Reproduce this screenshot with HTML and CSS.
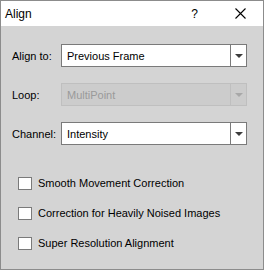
FILE: index.html
```html
<!DOCTYPE html>
<html lang="en">
<head>
    <meta charset="UTF-8">
    <title>Align</title>
    <link rel="stylesheet" href="styles.css">
</head>
<body>
    <div class="window">
        <div class="titlebar">
            <span class="title">Align</span>
            <span class="help">?</span>
            <span class="close">
                <svg width="11" height="11" viewBox="0 0 11 11"><path d="M0.5 0.5 L10.5 10.5 M10.5 0.5 L0.5 10.5" stroke="#000" stroke-width="1.1" fill="none"/></svg>
            </span>
        </div>
        <div class="content">
            <div class="row">
                <label class="label">Align to:</label>
                <div class="combo"><span class="value">Previous Frame</span><span class="arrow"></span></div>
            </div>
            <div class="row">
                <label class="label">Loop:</label>
                <div class="combo disabled"><span class="value">MultiPoint</span><span class="arrow"></span></div>
            </div>
            <div class="row">
                <label class="label">Channel:</label>
                <div class="combo"><span class="value">Intensity</span><span class="arrow"></span></div>
            </div>

            <div class="checks">
                <div class="check"><span class="box"></span>Smooth Movement Correction</div>
                <div class="check"><span class="box"></span>Correction for Heavily Noised Images</div>
                <div class="check"><span class="box"></span>Super Resolution Alignment</div>
            </div>
        </div>
    </div>
</body>
</html>
```

FILE: styles.css
```css
* {
    box-sizing: border-box;
}
body {
    margin: 0;
    font-family: "Liberation Sans", Arial, sans-serif;
    font-size: 11px;
    color: #000;
}
.window {
    width: 264px;
    height: 270px;
    border: 1px solid #8c8c8c;
    background-color: #d4d4d4;
    display: flex;
    flex-direction: column;
}
.titlebar {
    height: 25px;
    background-color: #fff;
    display: flex;
    align-items: center;
    font-size: 12px;
}
.title {
    margin-left: 4px;
}
.help {
    margin-left: auto;
    margin-right: 37px;
}
.close {
    display: flex;
    margin-right: 17px;
}
.content {
    padding: 18px 16px 0 11px;
}
.row {
    display: flex;
    align-items: center;
    height: 23px;
    margin-bottom: 16px;
}
.label {
    width: 49px;
    flex: none;
}
.combo {
    flex: 1;
    height: 23px;
    display: flex;
    background-color: #fff;
    border: 1px solid #7a7a7a;
}
.combo .value {
    flex: 1;
    display: flex;
    align-items: center;
    padding-left: 5px;
    border-right: 1px solid #7a7a7a;
}
.combo .arrow {
    width: 15px;
    display: flex;
    align-items: center;
    justify-content: center;
}
.combo .arrow::before {
    content: '';
    width: 0;
    height: 0;
    border-left: 4px solid transparent;
    border-right: 4px solid transparent;
    border-top: 4px solid #3c3c3c;
}
.combo.disabled {
    background-color: #cccccc;
    border-color: #bfbfbf;
    color: #9a9a9a;
}
.combo.disabled .value {
    border-right-color: #bfbfbf;
}
.combo.disabled .arrow::before {
    border-top-color: #a8a8a8;
}
.checks {
    padding-top: 15px;
    padding-left: 6px;
}
.check {
    display: flex;
    align-items: center;
    height: 14px;
    margin-bottom: 16px;
}
.check .box {
    width: 14px;
    height: 13px;
    border: 1px solid #7a7a7a;
    background-color: #fff;
    margin-right: 6px;
}
```
